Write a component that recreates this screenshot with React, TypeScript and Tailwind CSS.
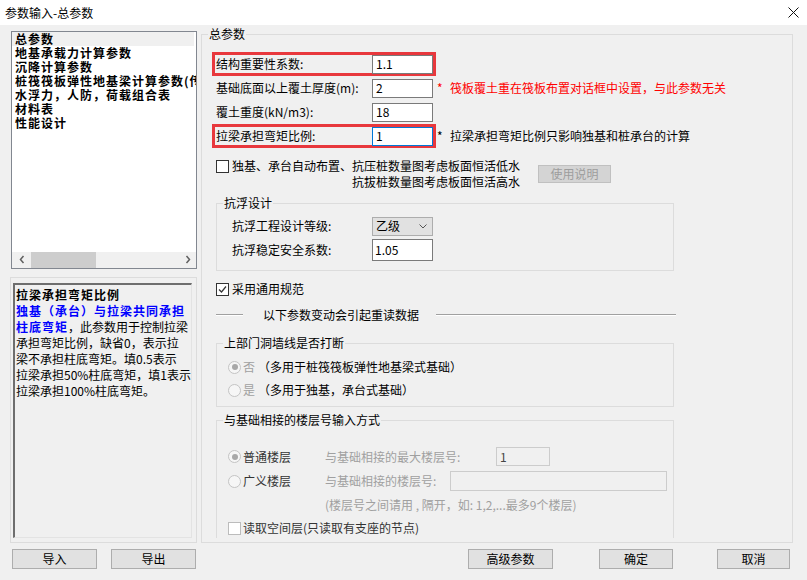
import React from 'react'

function Check({ checked = false, disabled = false }: { checked?: boolean; disabled?: boolean }) {
  return (
    <span
      className={`w-[13px] h-[13px] shrink-0 border flex items-center justify-center bg-white ${
        disabled ? 'border-[#bcbcbc]' : 'border-[#333333]'
      }`}
    >
      {checked && (
        <svg width="9" height="9" viewBox="0 0 9 9">
          <path d="M1 4.5 L3.5 7 L8 1.5" fill="none" stroke="#333" strokeWidth="1.2" />
        </svg>
      )}
    </span>
  )
}

function Radio({ checked = false }: { checked?: boolean }) {
  return (
    <span className="w-[13px] h-[13px] shrink-0 rounded-full border border-[#c4c4c4] bg-[#f6f6f6] flex items-center justify-center">
      {checked && <span className="w-[6px] h-[6px] rounded-full bg-[#a8a8a8]" />}
    </span>
  )
}

function Group({ title, className, children }: { title: string; className: string; children: React.ReactNode }) {
  return (
    <fieldset className={`border border-[#dcdcdc] ${className}`}>
      <legend className="ml-[6px] px-[1px] leading-[16px]">{title}</legend>
      {children}
    </fieldset>
  )
}

function ParamRow({
  label,
  value,
  boxed = false,
  focused = false,
  note,
  red = false,
}: {
  label: string
  value: string
  boxed?: boolean
  focused?: boolean
  note?: string
  red?: boolean
}) {
  return (
    <div className="flex items-center h-[24px]">
      <div
        className={`w-[224px] h-[24px] border-[3px] flex items-center pl-[1px] ${
          boxed ? 'border-[#e8383d]' : 'border-transparent'
        }`}
      >
        <span className="w-[156px]">{label}</span>
        <span
          className={`w-[61px] h-[19px] bg-white border flex items-center pl-[3px] ${
            focused ? 'border-[#0078d7]' : 'border-[#7a7a7a]'
          }`}
        >
          {value}
        </span>
      </div>
      {note && (
        <span className={`ml-[1px] flex ${red ? 'text-[#ff0000]' : ''}`}>
          <span className="w-[13px]">*</span>
          <span>{note}</span>
        </span>
      )}
    </div>
  )
}

const menu = ['地基承载力计算参数', '沉降计算参数', '桩筏筏板弹性地基梁计算参数(传统)', '水浮力，人防，荷载组合表', '材料表', '性能设计']

export default function App() {
  return (
    <div className="w-[807px] h-[580px] bg-[#f0f0f0] flex flex-col text-[12px] leading-[16px] text-black font-['Noto_Sans_CJK_SC',sans-serif] overflow-hidden">
      {/* title bar */}
      <div className="h-[25px] shrink-0 bg-white flex items-center justify-between pl-[5px] pr-[8px]">
        <span>参数输入-总参数</span>
        <svg width="11" height="11" viewBox="0 0 11 11">
          <path d="M0.5 0.5 L10.5 10.5 M10.5 0.5 L0.5 10.5" stroke="#111" strokeWidth="1" />
        </svg>
      </div>

      <div className="flex h-[518px] pt-[1px] shrink-0">
        {/* left column */}
        <div className="ml-[10px] w-[187px] pt-[5px] flex flex-col">
          <div className="ml-[1px] w-[186px] h-[238px] border border-[#828790] bg-white flex flex-col">
            <div className="flex-1 flex flex-col font-bold tracking-[1px] leading-[14px] overflow-hidden whitespace-nowrap">
              <div className="bg-[#f0f0f0] w-[182px] pl-[3px]">总参数</div>
              {menu.map((m) => (
                <div key={m} className="pl-[3px]">
                  {m}
                </div>
              ))}
            </div>
            <div className="h-[16px] bg-[#f0f0f0] flex items-stretch">
              <span className="w-[19px] flex items-center justify-center">
                <svg width="6" height="9" viewBox="0 0 6 9">
                  <path d="M4.5 1 L1.5 4.5 L4.5 8" fill="none" stroke="#606060" strokeWidth="1.5" />
                </svg>
              </span>
              <span className="w-[65px] bg-[#cdcdcd]" />
              <span className="flex-1" />
              <span className="w-[17px] flex items-center justify-center">
                <svg width="6" height="9" viewBox="0 0 6 9">
                  <path d="M1.5 1 L4.5 4.5 L1.5 8" fill="none" stroke="#606060" strokeWidth="1.5" />
                </svg>
              </span>
            </div>
          </div>

          <div className="mt-[8px] w-[187px] h-[267px] border border-[#dcdcdc] pl-[2px] pt-[5px]">
            <div className="w-[179px] h-[255px] border-t-2 border-l-2 border-r border-b border-t-[#6e6e6e] border-l-[#6e6e6e] border-r-[#e3e3e3] border-b-[#e3e3e3] pl-[1px] pt-[2px] whitespace-nowrap">
              <div className="font-bold tracking-[1px]">拉梁承担弯矩比例</div>
              <div className="font-bold tracking-[1px] text-[#0000ff]">独基（承台）与拉梁共同承担</div>
              <div>
                <span className="font-bold tracking-[1px] text-[#0000ff]">柱底弯矩</span>，此参数用于控制拉梁
              </div>
              <div>承担弯矩比例，缺省0，表示拉</div>
              <div>梁不承担柱底弯矩。填0.5表示</div>
              <div>拉梁承担50%柱底弯矩，填1表示</div>
              <div>拉梁承担100%柱底弯矩。</div>
            </div>
          </div>
        </div>

        {/* right group */}
        <Group title="总参数" className="ml-[4px] w-[592px] h-[517px]">
          <div className="flex flex-col pl-[10px] pt-[10px]">
            <ParamRow label="结构重要性系数:" value="1.1" boxed />
            <ParamRow
              label="基础底面以上覆土厚度(m):"
              value="2"
              note="筏板覆土重在筏板布置对话框中设置，与此参数无关"
              red
            />
            <ParamRow label="覆土重度(kN/m3):" value="18" />
            <ParamRow label="拉梁承担弯矩比例:" value="1" boxed focused note="拉梁承担弯矩比例只影响独基和桩承台的计算" />

            <div className="flex items-start mt-[10px] ml-[4px]">
              <span className="mt-[2px]">
                <Check />
              </span>
              <div className="ml-[3px] flex flex-col items-end">
                <span>独基、承台自动布置、抗压桩数量图考虑板面恒活低水</span>
                <span>抗拔桩数量图考虑板面恒活高水</span>
              </div>
              <span className="ml-[18px] mt-[7px] w-[73px] h-[18px] bg-[#d4d4d4] border border-[#c0c0c0] text-[#9d9d9d] flex items-center justify-center">
                使用说明
              </span>
            </div>

            <Group title="抗浮设计" className="mt-[5px] ml-[4px] w-[458px] h-[76px]">
              <div className="flex flex-col pl-[15px]">
                <div className="flex items-center h-[22px] mt-[4px]">
                  <span className="w-[140px]">抗浮工程设计等级:</span>
                  <span className="w-[61px] h-[19px] bg-[#e1e1e1] border border-[#adadad] flex items-center justify-between pl-[3px] pr-[5px]">
                    <span>乙级</span>
                    <svg width="8" height="5" viewBox="0 0 8 5">
                      <path d="M0.5 0.5 L4 4 L7.5 0.5" fill="none" stroke="#555" strokeWidth="1" />
                    </svg>
                  </span>
                </div>
                <div className="flex items-center h-[22px] mt-[2px]">
                  <span className="w-[140px]">抗浮稳定安全系数:</span>
                  <span className="w-[61px] h-[22px] bg-white border border-[#7a7a7a] flex items-center pl-[2px]">1.05</span>
                </div>
              </div>
            </Group>

            <div className="flex items-center h-[16px] mt-[10px] ml-[4px]">
              <Check checked />
              <span className="ml-[3px]">采用通用规范</span>
            </div>

            <div className="flex items-center h-[16px] mt-[10px] ml-[4px]">
              <span className="w-[27px] h-[2px] border-t border-b border-t-[#a0a0a0] border-b-white" />
              <span className="ml-[20px]">以下参数变动会引起重读数据</span>
              <span className="ml-[17px] w-[240px] h-[2px] border-t border-b border-t-[#a0a0a0] border-b-white" />
            </div>

            <Group title="上部门洞墙线是否打断" className="mt-[12px] ml-[4px] w-[458px] h-[72px]">
              <div className="flex flex-col pl-[11px]">
                <div className="flex items-center h-[16px] mt-[8px]">
                  <Radio checked />
                  <span className="ml-[2px] text-[#a0a0a0]">否</span>
                  <span className="ml-[3px]">（多用于桩筏筏板弹性地基梁式基础）</span>
                </div>
                <div className="flex items-center h-[16px] mt-[7px]">
                  <Radio />
                  <span className="ml-[2px] text-[#a0a0a0]">是</span>
                  <span className="ml-[3px]">（多用于独基，承台式基础）</span>
                </div>
              </div>
            </Group>

            <Group title="与基础相接的楼层号输入方式" className="mt-[5px] ml-[4px] w-[458px] h-[126px] border-b-0">
              <div className="flex flex-col">
                <div className="flex items-center h-[19px] mt-[19px] pl-[11px]">
                  <Radio checked />
                  <span className="ml-[2px] w-[82px] text-[#333]">普通楼层</span>
                  <span className="w-[171px] text-[#a0a0a0]">与基础相接的最大楼层号:</span>
                  <span className="w-[54px] h-[19px] border border-[#cccccc] bg-[#f0f0f0] flex items-center pl-[3px] text-[#444]">1</span>
                </div>
                <div className="flex items-center h-[20px] mt-[5px] pl-[11px]">
                  <Radio />
                  <span className="ml-[2px] w-[82px] text-[#333]">广义楼层</span>
                  <span className="w-[125px] text-[#a0a0a0]">与基础相接的楼层号:</span>
                  <span className="w-[217px] h-[20px] border border-[#cccccc] bg-[#f0f0f0]" />
                </div>
                <div className="h-[16px] mt-[6px] pl-[108px] text-[#a0a0a0] whitespace-nowrap">
                  (楼层号之间请用 , 隔开，如: 1,2,...最多9个楼层)
                </div>
                <div className="flex items-center h-[16px] mt-[7px] pl-[11px]">
                  <Check disabled />
                  <span className="ml-[2px] text-[#333]">读取空间层(只读取有支座的节点)</span>
                </div>
              </div>
            </Group>
          </div>
        </Group>
      </div>

      {/* buttons */}
      <div className="flex mt-[6px] pl-[12px] h-[20px] shrink-0">
        <span className="w-[85px] bg-[#e1e1e1] border border-[#adadad] flex items-center justify-center">导入</span>
        <span className="ml-[14px] w-[85px] bg-[#e1e1e1] border border-[#adadad] flex items-center justify-center">导出</span>
        <span className="ml-[272px] w-[85px] bg-[#e1e1e1] border border-[#adadad] flex items-center justify-center">高级参数</span>
        <span className="ml-[46px] w-[74px] bg-[#e1e1e1] border border-[#adadad] flex items-center justify-center">确定</span>
        <span className="ml-[44px] w-[73px] bg-[#e1e1e1] border border-[#adadad] flex items-center justify-center">取消</span>
      </div>
    </div>
  )
}
